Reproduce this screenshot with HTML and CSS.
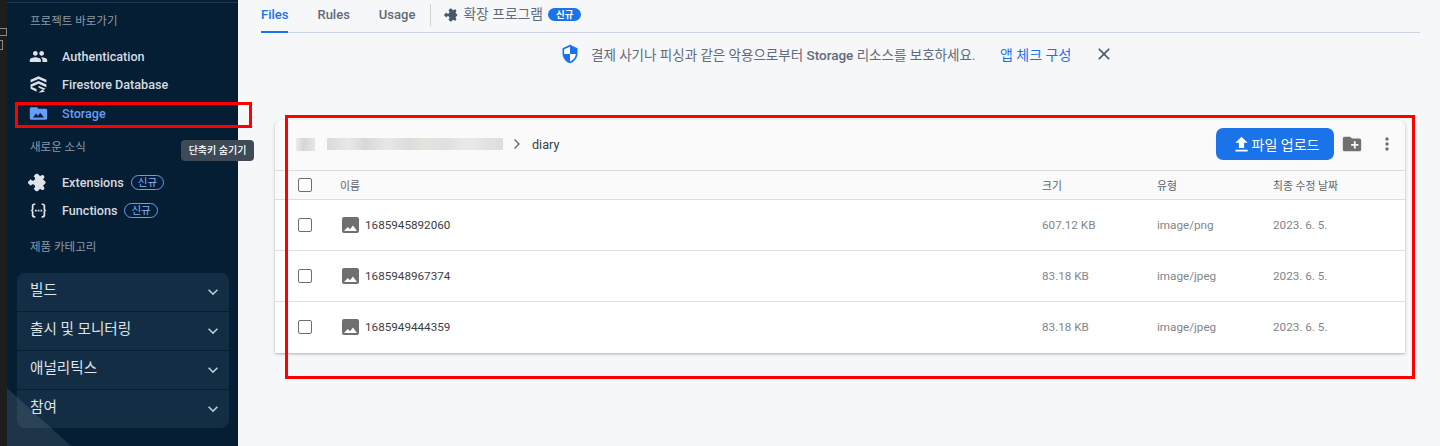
FILE: index.html
```html
<!DOCTYPE html>
<html lang="ko">
<head>
    <meta charset="UTF-8">
    <meta name="viewport" content="width=device-width, initial-scale=1.0">
    <title>Storage</title>
    <link rel="stylesheet" href="styles.css">
</head>
<body>
    <div class="app">
        <!-- 왼쪽 끝 에디터 조각 -->
        <div class="edge">
            <span class="edge_box"></span>
            <span class="edge_box edge_box2"></span>
        </div>

        <nav class="side">
            <p class="side_title side_title1">프로젝트 바로가기</p>
            <ul class="side_list">
                <li>
                    <svg class="side_icon" viewBox="0 0 24 24"><path d="M16 11c1.660 0 2.990-1.340 2.990-3S17.660 5 16 5c-1.660 0-3 1.340-3 3s1.340 3 3 3zm-8 0c1.660 0 2.990-1.340 2.990-3S9.660 5 8 5C6.340 5 5 6.340 5 8s1.340 3 3 3zm0 2c-2.330 0-7 1.170-7 3.500V19h14v-2.500c0-2.330-4.670-3.500-7-3.500zm8 0c-.29 0-.62.02-.97.05 1.160.84 1.970 1.970 1.970 3.450V19h6v-2.500c0-2.330-4.670-3.500-7-3.500z"/></svg>
                    <span>Authentication</span>
                </li>
                <li>
                    <svg class="side_icon" viewBox="0 0 24 24"><path d="M12 1.500 2 6v3.500l10-4.500 10 4.500V6z"/><path d="M12 7.500 2 12v3.500l10-4.500 10 4.500V12z"/><path d="M2 17.500 9.500 21v-3.200L2 14.500zM12 13.500l9 4-2.500 1.300-6.500-3z"/><path d="M12 22.500l8-1.500-3-2.600z"/></svg>
                    <span>Firestore Database</span>
                </li>
                <li class="on">
                    <svg class="side_icon" viewBox="0 0 24 24"><path d="M10 4H3C1.900 4 1 4.900 1 6v12c0 1.100.9 2 2 2h18c1.100 0 2-.9 2-2V8c0-1.100-.9-2-2-2h-9z"/><path class="cut" d="M5 17l4-5 2.500 3 2.500-4 5 6z"/></svg>
                    <span>Storage</span>
                </li>
            </ul>
            <p class="side_title side_title2">새로운 소식</p>
            <ul class="side_list side_list2">
                <li>
                    <svg class="side_icon puzzle" viewBox="0 0 24 24"><path d="M20.500 11H19V7c0-1.100-.9-2-2-2h-4V3.500C13 2.120 11.880 1 10.500 1S8 2.120 8 3.500V5H4c-1.100 0-1.990.9-1.990 2v3.800H3.500c1.490 0 2.700 1.210 2.700 2.700s-1.210 2.700-2.700 2.700H2V20c0 1.100.9 2 2 2h3.800v-1.500c0-1.490 1.210-2.700 2.700-2.700 1.490 0 2.700 1.210 2.700 2.700V22H17c1.100 0 2-.9 2-2v-4h1.500c1.380 0 2.500-1.120 2.500-2.500S21.880 11 20.500 11z"/></svg>
                    <span>Extensions</span>
                    <em class="new_badge">신규</em>
                </li>
                <li>
                    <svg class="side_icon" viewBox="0 0 24 24"><path d="M8 3H6.500C4.800 3 3.500 4.300 3.500 6v4c0 1-.7 2-2 2 1.300 0 2 1 2 2v4c0 1.700 1.300 3 3 3H8v-2.200H7c-.8 0-1.300-.5-1.300-1.300v-3.800c0-.7-.4-1.300-1-1.700.6-.4 1-1 1-1.700V6.500c0-.8.5-1.300 1.300-1.300h1zM16 3h1.500c1.700 0 3 1.300 3 3v4c0 1 .7 2 2 2-1.300 0-2 1-2 2v4c0 1.700-1.300 3-3 3H16v-2.200h1c.8 0 1.300-.5 1.300-1.300v-3.800c0-.7.4-1.300 1-1.700-.6-.4-1-1-1-1.700V6.500c0-.8-.5-1.300-1.300-1.300h-1z"/><path d="M7.500 11h2.200v2.200H7.500zM11 11h2.200v2.200H11zM14.500 11h2.200v2.200h-2.200z"/></svg>
                    <span>Functions</span>
                    <em class="new_badge">신규</em>
                </li>
            </ul>
            <p class="side_title side_title3">제품 카테고리</p>
            <ul class="accordion">
                <li><span>빌드</span><svg viewBox="0 0 24 24"><path d="M16.590 8.590 12 13.170 7.410 8.590 6 10l6 6 6-6z"/></svg></li>
                <li><span>출시 및 모니터링</span><svg viewBox="0 0 24 24"><path d="M16.590 8.590 12 13.170 7.410 8.590 6 10l6 6 6-6z"/></svg></li>
                <li><span>애널리틱스</span><svg viewBox="0 0 24 24"><path d="M16.590 8.590 12 13.170 7.410 8.590 6 10l6 6 6-6z"/></svg></li>
                <li><span>참여</span><svg viewBox="0 0 24 24"><path d="M16.590 8.590 12 13.170 7.410 8.590 6 10l6 6 6-6z"/></svg></li>
            </ul>
            <div class="corner"></div>
        </nav>

        <main class="main">
            <div class="tabs">
                <a class="tab on">Files</a>
                <a class="tab">Rules</a>
                <a class="tab">Usage</a>
                <span class="tab_line"></span>
                <svg class="tab_puzzle" viewBox="0 0 24 24"><path d="M20.500 11H19V7c0-1.100-.9-2-2-2h-4V3.500C13 2.120 11.880 1 10.500 1S8 2.120 8 3.500V5H4c-1.100 0-1.990.9-1.990 2v3.800H3.500c1.490 0 2.700 1.210 2.700 2.700s-1.210 2.700-2.700 2.700H2V20c0 1.100.9 2 2 2h3.800v-1.500c0-1.490 1.210-2.700 2.700-2.700 1.490 0 2.700 1.210 2.700 2.700V22H17c1.100 0 2-.9 2-2v-4h1.500c1.380 0 2.500-1.120 2.500-2.500S21.880 11 20.500 11z"/></svg>
                <span class="tab_ext">확장 프로그램</span>
                <em class="tab_badge">신규</em>
            </div>

            <div class="notice">
                <svg class="shield" viewBox="0 0 24 24">
                    <path d="M12 1 3 5v6c0 5.550 3.840 10.740 9 12 5.160-1.260 9-6.450 9-12V5z"/>
                    <path class="white" d="M12 3.200 5 6.300V12h7zM12 12v8.900c3.700-1.100 6.500-4.800 7-8.900z"/>
                </svg>
                <span class="notice_text">결제 사기나 피싱과 같은 악용으로부터 <b>Storage</b> 리소스를 보호하세요.</span>
                <a class="notice_link">앱 체크 구성</a>
                <svg class="notice_close" viewBox="0 0 24 24"><path d="M19 6.410 17.590 5 12 10.590 6.410 5 5 6.410 10.590 12 5 17.590 6.410 19 12 13.410 17.590 19 19 17.590 13.410 12z"/></svg>
            </div>

            <section class="card">
                <div class="card_head">
                    <span class="blur blur1"></span>
                    <span class="blur blur2"></span>
                    <svg class="crumb_arrow" viewBox="0 0 8 12"><path d="M1.500 1.500 6 6l-4.500 4.500" /></svg>
                    <span class="crumb">diary</span>
                    <button type="button" class="upload">
                        <svg viewBox="0 0 24 24"><path d="M9 16h6v-6h4l-7-7-7 7h4zm-4 2h14v2H5z"/></svg>
                        파일 업로드
                    </button>
                    <svg class="head_folder" viewBox="0 0 24 24"><path d="M20 6h-8l-2-2H4c-1.110 0-1.990.89-1.990 2L2 18c0 1.110.89 2 2 2h16c1.110 0 2-.89 2-2V8c0-1.110-.89-2-2-2zm-1 8h-3v3h-2v-3h-3v-2h3V9h2v3h3v2z"/></svg>
                    <svg class="head_more" viewBox="0 0 24 24"><path d="M12 8c1.100 0 2-.9 2-2s-.9-2-2-2-2 .9-2 2 .9 2 2 2zm0 2c-1.100 0-2 .9-2 2s.9 2 2 2 2-.9 2-2-.9-2-2-2zm0 6c-1.100 0-2 .9-2 2s.9 2 2 2 2-.9 2-2-.9-2-2-2z"/></svg>
                </div>
                <div class="row row_title">
                    <span class="check"></span>
                    <span class="col_name">이름</span>
                    <span>크기</span>
                    <span>유형</span>
                    <span>최종 수정 날짜</span>
                </div>
                <div class="row">
                    <span class="check"></span>
                    <span class="col_name col_file">
                        <svg viewBox="0 0 17 16"><path d="M2 0h13a2 2 0 0 1 2 2v12a2 2 0 0 1-2 2H2a2 2 0 0 1-2-2V2a2 2 0 0 1 2-2zm0 14h13l-4-5.500-3 3.800L5.800 10z" fill-rule="evenodd"/></svg>
                        1685945892060
                    </span>
                    <span>607.12 KB</span>
                    <span>image/png</span>
                    <span>2023. 6. 5.</span>
                </div>
                <div class="row">
                    <span class="check"></span>
                    <span class="col_name col_file">
                        <svg viewBox="0 0 17 16"><path d="M2 0h13a2 2 0 0 1 2 2v12a2 2 0 0 1-2 2H2a2 2 0 0 1-2-2V2a2 2 0 0 1 2-2zm0 14h13l-4-5.500-3 3.800L5.800 10z" fill-rule="evenodd"/></svg>
                        1685948967374
                    </span>
                    <span>83.18 KB</span>
                    <span>image/jpeg</span>
                    <span>2023. 6. 5.</span>
                </div>
                <div class="row row_last">
                    <span class="check"></span>
                    <span class="col_name col_file">
                        <svg viewBox="0 0 17 16"><path d="M2 0h13a2 2 0 0 1 2 2v12a2 2 0 0 1-2 2H2a2 2 0 0 1-2-2V2a2 2 0 0 1 2-2zm0 14h13l-4-5.500-3 3.800L5.800 10z" fill-rule="evenodd"/></svg>
                        1685949444359
                    </span>
                    <span>83.18 KB</span>
                    <span>image/jpeg</span>
                    <span>2023. 6. 5.</span>
                </div>
            </section>
        </main>

        <!-- 위에 얹는 것들: 툴팁, 빨간 표시 -->
        <div class="tooltip">단축키 숨기기</div>
        <div class="mark mark_storage"></div>
        <div class="mark mark_card"></div>
    </div>
</body>
</html>
```

FILE: styles.css
```css
* {
    margin:0; padding:0; box-sizing:border-box; list-style:none;
    font-family:Roboto, "Noto Sans CJK KR", sans-serif;
}
html, body {width:1440px; height:446px; overflow:hidden;}
.app {display:flex; width:1440px; height:446px; background:#f6f7f9; position:relative; overflow:hidden;}

/* edge */
.edge {width:7px; flex:none; background:#1d1d1d; position:relative; overflow:hidden;}
.edge_box {position:absolute; left:-4px; top:28px; width:11px; height:8px; border:1px solid #8a8a8a;}
.edge_box2 {left:-8px; top:40px; height:10px;}

/* sidebar */
.side {width:231px; flex:none; background:#051e34; position:relative; border-top:2px solid #051e34; overflow:hidden;}
.side::before {content:""; position:absolute; left:0; right:0; top:0; height:1px; background:#1c3a55;}
.side_title {font-size:11.500px; line-height:16px; color:#8b9aa8; padding-left:23px;}
.side_title1 {margin-top:11px;}
.side_title2 {margin-top:11px;}
.side_title3 {margin-top:14px;}
.side_list {margin-top:13px;}
.side_list li {
    display:flex; align-items:center; height:28.500px; padding-left:22px;
    font-size:12.600px; font-weight:500; color:#d6dbe0;
}
.side_list li.on {color:#669df6;}
.side_list2 {margin-top:14px;}
.side_list2 li {height:28px;}
.side_icon {width:19px; height:19px; fill:#dfe3e7; flex:none; margin-right:14px;}
.on .side_icon {fill:#669df6;}
.on .side_icon .cut {fill:#051e34;}
.side_icon.puzzle {transform:rotate(45deg);}
.side_list2 li .side_icon {margin-right:14px;}
.new_badge {
    font-style:normal; font-size:10.500px; line-height:13px; color:#8ab4f8; height:15px;
    border:1px solid #669df6; border-radius:8px; padding:0 6px; margin-left:7px; font-weight:400;
}
.accordion {margin:18px 9px 0 10px; background:#132d45; border-radius:8px; overflow:hidden;}
.accordion li {
    height:39px; display:flex; align-items:center; justify-content:space-between;
    padding:0 6px 0 13px; font-size:14.600px; color:#dfe4e8;
    border-bottom:1px solid #051e34;
}
.accordion li:last-child {border-bottom:0; height:38px;}
.accordion li span {padding-bottom:7px;}
.accordion li svg {width:20px; height:20px; fill:#b6cbdb;}
.corner {
    position:absolute; left:0; bottom:0; width:64px; height:58px;
    background:rgba(255,255,255,0.1);
    clip-path:polygon(0 0, 100% 100%, 0 100%);
}

/* main */
.main {flex:1; min-width:0;}
.tabs {
    display:flex; align-items:flex-start; height:33px; margin:0 20px 0 23px;
    border-bottom:1px solid #c9d4e0;
}
.tab {
    font-size:13px; font-weight:500; color:#5f6b7a; height:33px; line-height:30px; margin-right:29px;
}
.tab.on {color:#1a73e8; border-bottom:2px solid #1a73e8;}
.tab_line {width:1px; height:22px; background:#c9d4e0; margin:4px 0 0 -14px;}
.tab_puzzle {width:14px; height:14px; fill:#46586c; margin:8px -1px 0 14px; transform:rotate(45deg);}
.tab_ext {font-size:13.800px; line-height:29px; color:#5f6b7a; margin-left:5px;}
.tab_badge {
    font-style:normal; font-size:9.500px; font-weight:700; line-height:13px; height:13px; color:#fff;
    background:#1a73e8; border-radius:7px; padding:0 8px; margin:8px 0 0 5px;
}
.notice {display:flex; align-items:center; height:42px; padding-left:322px; margin-bottom:45px; font-size:13.500px;}
.shield {width:20px; height:20px; flex:none; margin-right:11px;}
.shield path {fill:#1a73e8;}
.shield .white {fill:#fff;}
.notice_text {color:#5f6b7a; width:383px; white-space:nowrap;}
.notice_text b {font-weight:500;}
.notice_link {color:#1a73e8; margin-left:26px; width:70px; white-space:nowrap; font-size:14px;}
.notice_close {width:20px; height:20px; fill:#46586c; margin-left:24px;}

/* card */
.card {
    margin-left:37px; width:1130px; border-radius:7px 7px 0 0; background:#fff;
    box-shadow:0 1px 3px rgba(60,64,67,0.4);
}
.card_head {
    display:flex; align-items:center; height:51px; padding:0 0 2px 21px; background:#fafafa; border-radius:7px 7px 0 0;
    border-bottom:1px solid #dcdcdc; position:relative;
}
.blur {display:block; height:12px; background-color:#e3e3e3;}
.blur1 {
    width:19px; height:13px; margin-right:12px;
    background:linear-gradient(90deg, #ececec, #d6d6d6 40%, #e6e6e6);
}
.blur2 {
    width:176px;
    background:linear-gradient(90deg, #dedad6, #e8e8ea 12%, #d8d8da 22%, #e9e6e6 34%, #dcdcde 46%, #e6e2dc 56%, #e0e0e2 68%, #e9e9ea 80%, #dcdce2);
}
.crumb_arrow {width:8px; height:12px; fill:none; stroke:#5f6368; stroke-width:1.300; margin-left:10px;}
.crumb {font-size:12.600px; color:#3c4043; margin-left:11px;}
.upload {
    display:flex; align-items:center; justify-content:center; margin-left:auto; width:118px; height:32px;
    background:#1a73e8; color:#fff; border:0; border-radius:7px; font-size:14px;
}
.upload svg {width:21px; height:21px; fill:#fff; margin-right:0;}
.head_folder {width:22px; height:22px; fill:#6f6f6f; margin-left:7px;}
.head_more {width:20px; height:20px; fill:#6f6f6f; margin:0 8px 0 14px;}
.row {
    display:grid; grid-template-columns:42px 702px 115px 116px 1fr; align-items:center;
    height:51px; padding:0 0 1px 23px; border-bottom:1px solid #e0e0e0;
    font-size:11.700px; color:#80868b;
}
.row_title {height:29px; background:#fafafa; border-bottom:1px solid #dcdcdc; font-size:10.800px; color:#5f6368;}
.row_last {border-bottom:0;}
.check {width:14px; height:14px; border:1px solid #6e6e6e; border-radius:2px; background:#fff;}
.col_name {color:#5f6368;}
.col_file {display:flex; align-items:center; color:#3c4043; padding-left:2px;}
.col_file svg {width:17px; height:16px; fill:#6f6f70; margin-right:6px;}

/* overlay */
.tooltip {
    position:absolute; left:181px; top:140px; width:73px; height:21px; background:#3f4a57; color:#fff;
    border-radius:4px; font-size:10px; font-weight:500; line-height:21px; text-align:center;
}
.mark {position:absolute; border:3px solid #f00; pointer-events:none;}
.mark_storage {left:15px; top:102px; width:237px; height:26px;}
.mark_card {left:285px; top:115px; width:1130px; height:264px;}
```
